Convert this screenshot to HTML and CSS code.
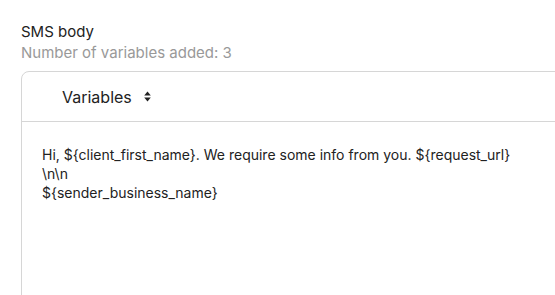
FILE: index.html
```html
<!DOCTYPE html>
<html lang="en">
  <head>
    <meta charset="UTF-8">
    <meta name="viewport" content="width=device-width, initial-scale=1.0">
    <title>SMS body</title>
    <link rel="stylesheet" href="styles.css">
  </head>
  <body>
    <section class="field">
      <label class="field-label">SMS body</label>
      <div class="field-hint">Number of variables added: 3</div>

      <div class="editor">
        <div class="editor-toolbar">
          <button type="button" class="var-button">
            Variables
            <svg class="sort-icon" width="7" height="11" viewBox="0 0 7 11">
              <path d="M3.5 0.5 L6.8 4.6 L0.2 4.6 Z" fill="#222" />
              <path d="M3.5 10.5 L6.8 6.4 L0.2 6.4 Z" fill="#222" />
            </svg>
          </button>
        </div>
        <div class="editor-body">
          <p>Hi, ${client_first_name}. We require some info from you. ${request_url}</p>
          <p>\n\n</p>
          <p>${sender_business_name}</p>
        </div>
      </div>
    </section>
  </body>
</html>
```

FILE: styles.css
```css
body {
  margin: 0;
  padding: 23px 0 0 21px;
  font-family: Inter, "Liberation Sans", Arial, sans-serif;
  color: #222;
  background: #fff;
  overflow: hidden;
}

.field-label {
  display: block;
  font-size: 15px;
  line-height: 18px;
  color: #222;
}

.field-hint {
  margin-top: 3px;
  font-size: 15px;
  line-height: 18px;
  color: #999;
}

.editor {
  margin-top: 9px;
  width: 600px;
  height: 260px;
  border: 1px solid #d6d6d6;
  border-radius: 8px;
}

.editor-toolbar {
  height: 49px;
  border-bottom: 1px solid #d6d6d6;
  display: flex;
  align-items: center;
  padding-left: 40px;
}

.var-button {
  display: flex;
  align-items: center;
  gap: 12px;
  padding: 0;
  border: none;
  background: none;
  font-family: inherit;
  font-size: 16px;
  color: #222;
}

.editor-body {
  padding: 23px 20px 0 20px;
  font-size: 14px;
  line-height: 19px;
}

.editor-body p {
  margin: 0;
}
```
